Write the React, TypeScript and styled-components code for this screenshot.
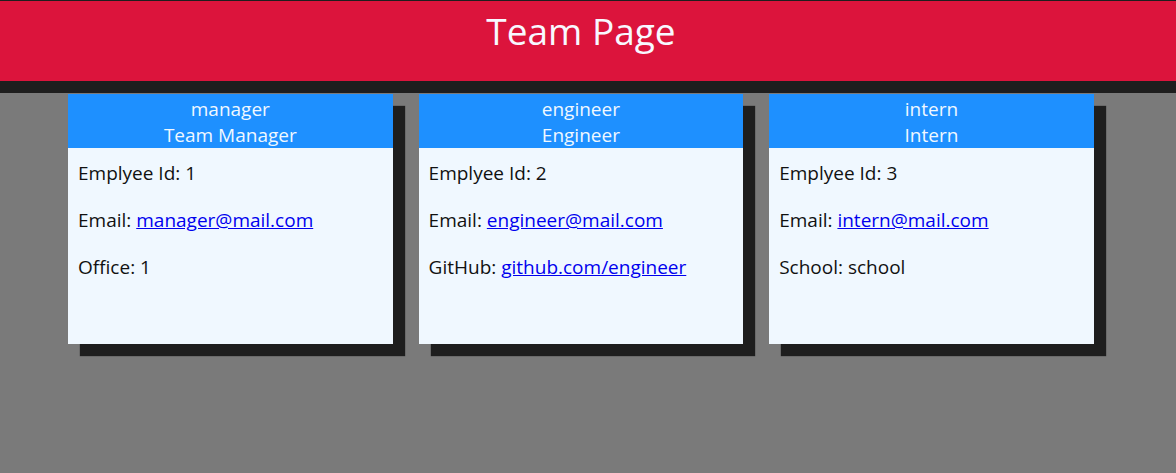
import React from "react";
import styled, { createGlobalStyle } from "styled-components";

const Global = createGlobalStyle`
  html, body { margin: 0; padding: 0; background: #1e1e1e; }
  body { font-family: "Open Sans", "Noto Sans", "DejaVu Sans", sans-serif; }
`;

const Page = styled.div`
  min-height: 473px;
  display: flex;
  flex-direction: column;
  padding-top: 1px;
  box-sizing: border-box;
  background: #1e1e1e;
`;

const Header = styled.header`
  height: 80px;
  background: #dc143c;
  display: flex;
  justify-content: center;
  padding-right: 14px;
  margin-bottom: 12px;
`;

const Title = styled.h1`
  margin: 0;
  padding-top: 5px;
  font-weight: 400;
  font-size: 37px;
  line-height: 50px;
  color: #f8f8ff;
`;

const Main = styled.main`
  flex: 1;
  background: #7a7a7a;
  display: flex;
  gap: 26px;
  padding: 1px 0 0 68px;
  align-items: flex-start;
`;

const Card = styled.section`
  width: 324.6px;
  background: #f0f8ff;
  box-shadow: 12px 12px 1px #1e1e1e;
  height: 250px;
  display: flex;
  flex-direction: column;
`;

const CardHead = styled.div`
  background: #1e90ff;
  color: #f0f8ff;
  text-align: center;
  font-size: 19px;
  line-height: 25.5px;
  padding-top: 3px;
  height: 54px;
  box-sizing: border-box;
`;

const CardBody = styled.div`
  padding: 12px 10px;
  color: #111;
  font-size: 19px;
  line-height: 27px;
`;

const Line = styled.p`
  margin: 0 0 20px;
`;

const Link = styled.a`
  color: #0000ee;
  text-decoration: underline;
`;

type Emp = {
  name: string;
  role: string;
  id: number;
  email: string;
  extraLabel: string;
  extra: string;
  extraLink?: boolean;
};

const team: Emp[] = [
  { name: "manager", role: "Team Manager", id: 1, email: "manager@mail.com", extraLabel: "Office", extra: "1" },
  { name: "engineer", role: "Engineer", id: 2, email: "engineer@mail.com", extraLabel: "GitHub", extra: "github.com/engineer", extraLink: true },
  { name: "intern", role: "Intern", id: 3, email: "intern@mail.com", extraLabel: "School", extra: "school" },
];

export default function App() {
  return (
    <>
      <Global />
      <Page>
        <Header>
          <Title>Team Page</Title>
        </Header>
        <Main>
          {team.map((e) => (
            <Card key={e.id}>
              <CardHead>
                <div>{e.name}</div>
                <div>{e.role}</div>
              </CardHead>
              <CardBody>
                <Line>Emplyee Id: {e.id}</Line>
                <Line>
                  Email: <Link href={`mailto:${e.email}`}>{e.email}</Link>
                </Line>
                <Line>
                  {e.extraLabel}:{" "}
                  {e.extraLink ? <Link href={`https://${e.extra}`}>{e.extra}</Link> : e.extra}
                </Line>
              </CardBody>
            </Card>
          ))}
        </Main>
      </Page>
    </>
  );
}
